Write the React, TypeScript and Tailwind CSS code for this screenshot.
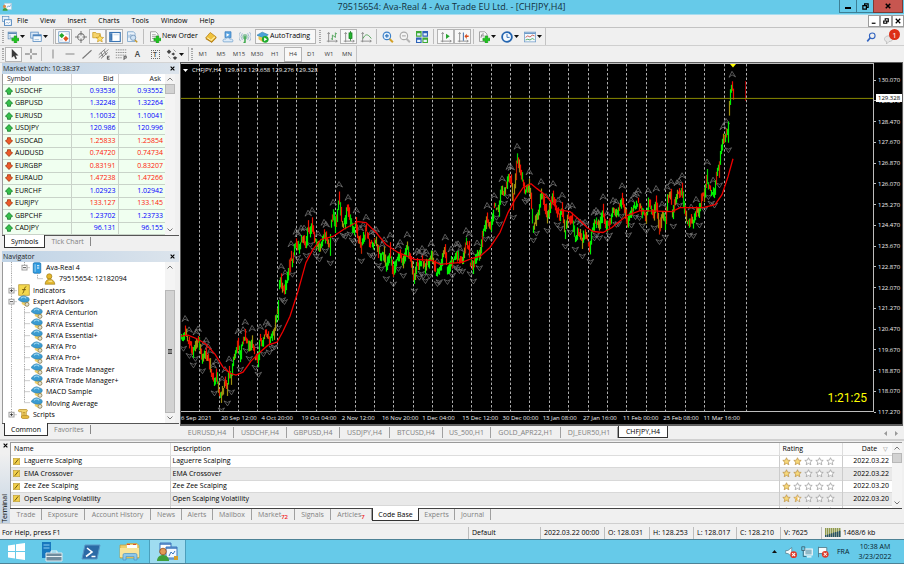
import type { ReactNode } from 'react';
import clsx from 'clsx';

type Point = [number, number];

const menus = ['File', 'View', 'Insert', 'Charts', 'Tools', 'Window', 'Help'];
const timeframes = ['M1', 'M5', 'M15', 'M30', 'H1', 'H4', 'D1', 'W1', 'MN'];

const quotes = [
  { symbol: 'USDCHF', bid: '0.93536', ask: '0.93552', up: true },
  { symbol: 'GBPUSD', bid: '1.32248', ask: '1.32264', up: true },
  { symbol: 'EURUSD', bid: '1.10032', ask: '1.10041', up: true },
  { symbol: 'USDJPY', bid: '120.986', ask: '120.996', up: true },
  { symbol: 'USDCAD', bid: '1.25833', ask: '1.25854', up: false },
  { symbol: 'AUDUSD', bid: '0.74720', ask: '0.74734', up: false },
  { symbol: 'EURGBP', bid: '0.83191', ask: '0.83207', up: false },
  { symbol: 'EURAUD', bid: '1.47238', ask: '1.47266', up: false },
  { symbol: 'EURCHF', bid: '1.02923', ask: '1.02942', up: true },
  { symbol: 'EURJPY', bid: '133.127', ask: '133.145', up: false },
  { symbol: 'GBPCHF', bid: '1.23702', ask: '1.23733', up: true },
  { symbol: 'CADJPY', bid: '96.131', ask: '96.155', up: true },
];

const advisors = [
  'ARYA Centurion',
  'ARYA Essential',
  'ARYA Essential+',
  'ARYA Pro',
  'ARYA Pro+',
  'ARYA Trade Manager',
  'ARYA Trade Manager+',
  'MACD Sample',
  'Moving Average',
];

const chartTabs = [
  { label: 'EURUSD,H4', width: 'w-[53px]' },
  { label: 'USDCHF,H4', width: 'w-[53px]' },
  { label: 'GBPUSD,H4', width: 'w-[53px]' },
  { label: 'USDJPY,H4', width: 'w-[50px]' },
  { label: 'BTCUSD,H4', width: 'w-[53px]' },
  { label: 'US_500,H1', width: 'w-[48px]' },
  { label: 'GOLD_APR22,H1', width: 'w-[70px]' },
  { label: 'DJ_EUR50,H1', width: 'w-[57px]' },
  { label: 'CHFJPY,H4', width: 'w-[50px]', active: true },
];

const terminalTabs = [
  { label: 'Trade', width: 'w-[31px]' },
  { label: 'Exposure', width: 'w-[43px]' },
  { label: 'Account History', width: 'w-[66px]' },
  { label: 'News', width: 'w-[31px]' },
  { label: 'Alerts', width: 'w-[31px]' },
  { label: 'Mailbox', width: 'w-[39px]' },
  { label: 'Market', width: 'w-[43px]', count: '72' },
  { label: 'Signals', width: 'w-[36px]' },
  { label: 'Articles', width: 'w-[41px]', count: '7' },
  { label: 'Code Base', width: 'w-[47px]', active: true },
  { label: 'Experts', width: 'w-[36px]' },
  { label: 'Journal', width: 'w-[36px]' },
];

const codeBase = [
  { name: 'Laguerre Scalping', rating: 2, date: '2022.03.22' },
  { name: 'EMA Crossover', rating: 2, date: '2022.03.22' },
  { name: 'Zee Zee Scalping', rating: 1, date: '2022.03.20' },
  { name: 'Open Scalping Volatility', rating: 1.5, date: '2022.03.20' },
  { name: 'Black Candlestand Scalping', rating: 1, date: '2022.03.18' },
];

const statusCells = [
  { text: 'Default', width: 'w-[72px]' },
  { text: '2022.03.22 00:00', width: 'w-[64px]' },
  { text: 'O: 128.031', width: 'w-[45px]' },
  { text: 'H: 128.253', width: 'w-[44px]' },
  { text: 'L: 128.017', width: 'w-[43px]' },
  { text: 'C: 128.210', width: 'w-[44px]' },
  { text: 'V: 7625', width: 'w-[41px]' },
];

const prices = Array.from({ length: 17 }, (_, i) => (130.07 - i * 0.8).toFixed(3));

const times = [
  '6 Sep 2021',
  '20 Sep 12:00',
  '4 Oct 20:00',
  '19 Oct 04:00',
  '2 Nov 12:00',
  '16 Nov 20:00',
  '1 Dec 04:00',
  '15 Dec 12:00',
  '30 Dec 00:00',
  '13 Jan 08:00',
  '27 Jan 16:00',
  '11 Feb 00:00',
  '25 Feb 08:00',
  '11 Mar 16:00',
];

const pricePath: Point[] = [
  [181, 340], [185, 333], [188, 342], [193, 352], [198, 342], [202, 360], [206, 353], [210, 367],
  [214, 385], [216, 375], [219, 393], [221, 398], [225, 382], [227, 388], [229, 372], [231, 378],
  [234, 357], [238, 347], [240, 358], [242, 343], [245, 337], [249, 347], [252, 343], [255, 357],
  [258, 362], [260, 338], [262, 343], [265, 335], [270, 340], [274, 333], [276, 317], [278, 310],
  [279, 283], [281, 280], [282, 287], [285, 288], [288, 275], [291, 257], [292, 263], [295, 245],
  [299, 248], [302, 238], [306, 245], [308, 225], [310, 233], [312, 227], [315, 242], [320, 247],
  [324, 233], [327, 242], [330, 247], [331, 225], [333, 215], [335, 227], [339, 200], [342, 225],
  [345, 223], [347, 208], [350, 220], [353, 232], [356, 225], [358, 238], [361, 247], [366, 230],
  [369, 242], [372, 245], [376, 243], [380, 257], [384, 255], [386, 268], [390, 253], [393, 272],
  [397, 258], [400, 255], [403, 263], [407, 248], [412, 267], [414, 280], [417, 263], [419, 267],
  [422, 260], [425, 270], [428, 263], [432, 257], [436, 273], [440, 268], [442, 260], [445, 250],
  [447, 270], [452, 262], [457, 257], [462, 263], [466, 243], [469, 248], [470, 263], [473, 268],
  [476, 257], [480, 253], [483, 233], [487, 220], [491, 228], [494, 207], [499, 207], [501, 192],
  [504, 193], [509, 177], [511, 183], [513, 200], [515, 183], [517, 160], [519, 167], [522, 177],
  [525, 192], [529, 188], [531, 203], [533, 228], [536, 220], [539, 212], [541, 195], [544, 203],
  [547, 218], [551, 205], [553, 197], [556, 210], [560, 217], [562, 210], [565, 233], [568, 217],
  [572, 220], [575, 240], [578, 232], [582, 242], [585, 233], [588, 243], [590, 247], [592, 230],
  [595, 223], [599, 227], [603, 212], [606, 227], [609, 222], [613, 213], [618, 210], [622, 200],
  [624, 207], [627, 223], [630, 215], [633, 208], [638, 203], [642, 213], [646, 217], [649, 202],
  [652, 212], [654, 215], [656, 202], [659, 230], [662, 215], [665, 222], [668, 197], [671, 198],
  [672, 215], [676, 197], [678, 192], [682, 193], [684, 207], [687, 223], [691, 220], [693, 223],
  [696, 210], [699, 212], [702, 195], [704, 197], [707, 175], [708, 187], [711, 193], [714, 192],
  [717, 173], [719, 168], [721, 150], [723, 138], [726, 135], [728, 132], [729, 107], [731, 90],
  [732, 86], [733, 92], [734, 97],
];

const averagePath: Point[] = [
  [181, 337], [188, 336], [198, 340], [206, 345], [215, 355], [223, 368], [230, 374], [236, 376],
  [243, 373], [251, 362], [260, 353], [268, 346], [277, 343], [283, 332], [290, 317], [298, 292],
  [306, 263], [313, 250], [321, 240], [333, 237], [345, 229], [358, 222], [366, 223], [376, 233],
  [386, 245], [398, 253], [415, 260], [432, 261], [440, 265], [450, 264], [462, 263], [472, 259],
  [480, 257], [490, 248], [500, 233], [508, 213], [515, 200], [523, 188], [531, 184], [537, 189],
  [545, 195], [552, 203], [558, 210], [570, 212], [578, 219], [587, 228], [593, 232], [603, 233],
  [612, 228], [618, 223], [627, 216], [640, 211], [672, 212], [680, 208], [690, 208], [703, 208],
  [715, 205], [722, 195], [728, 177], [733, 159],
];

interface Candle {
  x: number;
  high: number;
  low: number;
  color: string;
}

// One candle per pixel column, with a repeatable spread around the path.
function buildCandles(path: Point[]): Candle[] {
  let seed = 17;
  const rand = () => {
    seed = (seed * 16807) % 2147483647;
    return seed / 2147483647;
  };
  const candles: Candle[] = [];
  for (let i = 0; i < path.length - 1; i++) {
    const [x0, y0] = path[i];
    const [x1, y1] = path[i + 1];
    for (let x = x0; x < x1; x++) {
      const step = (y1 - y0) / (x1 - x0);
      const mid = y0 + step * (x - x0) + (rand() - 0.5) * 5;
      const half = 1 + rand() * 4 + Math.min(Math.abs(step) / 2, 6);
      const mixed = rand();
      let color = step < 0 ? '#00f000' : '#f01000';
      if (mixed < 0.2) color = '#a09010';
      else if (mixed < 0.35) color = step < 0 ? '#c82000' : '#00d000';
      candles.push({ x, high: mid - half, low: mid + half, color });
    }
  }
  return candles;
}

const candles = buildCandles(pricePath);

// Fractals: a candle that tops or bottoms both of its neighbours.
const fractals = candles.flatMap((c, i) => {
  const around = [candles[i - 1], candles[i + 1]];
  if (around.some((n) => !n)) return [];
  const marks: { x: number; y: number; up: boolean }[] = [];
  if (around.every((n) => n.high > c.high)) marks.push({ x: c.x, y: c.high - 7, up: true });
  if (around.every((n) => n.low < c.low)) marks.push({ x: c.x, y: c.low + 7, up: false });
  return marks;
});

const gridLines = [...Array.from({ length: 28 }, (_, i) => Math.round(199.2 + i * 19.42)), 746];

function Icon({ children, size = 'size-3' }: { children: ReactNode; size?: string }) {
  return (
    <svg viewBox="0 0 16 16" className={clsx('shrink-0', size)} fill="none" aria-hidden="true">
      {children}
    </svg>
  );
}

const plus = (
  <path d="M9.500 6.500h3.500v3h3V13h-3v3H9.500v-3h-3V9.500h3z" fill="#1fc41f" stroke="#0b8a0b" strokeWidth=".6" />
);

const axes = (
  <path d="M3.500 2v13M1 13.500h14M2 4l1.500-2L5 4M13 12l2 1.500-2 1.500" stroke="#8a8a8a" strokeWidth="1.200" />
);

const icons = {
  newChart: (
    <>
      <rect x="1.500" y="1.500" width="11" height="9" fill="#eef5fb" stroke="#5b88b5" />
      <path d="M1.500 3h11" stroke="#5b88b5" strokeWidth="2" />
      <path d="M4 5v4h6" stroke="#7da3c8" />
      {plus}
    </>
  ),
  profiles: (
    <>
      <rect x="1" y="1.500" width="10" height="8" fill="#dbe9f7" stroke="#4d84bd" />
      <rect x="4" y="5" width="11" height="9" fill="#f4f9fd" stroke="#4d84bd" />
      <path d="M4 6h11" stroke="#4d84bd" strokeWidth="2" />
      <path d="M6 11.500h6" stroke="#8fb3d6" />
    </>
  ),
  marketWatch: (
    <>
      <rect x="1" y="1" width="14" height="14" fill="#fff" stroke="#5f8fc0" />
      <path d="M5 2.500L8.500 6 5 9.500 1.500 6z" fill="#25a82a" />
      <path d="M10.500 6.500L14 10l-3.500 4L7 10z" fill="#e0521c" />
      <path d="M10 4h4M2.500 12h4" stroke="#a8c0d8" />
    </>
  ),
  dataWindow: (
    <>
      <circle cx="8" cy="8" r="4.500" stroke="#777" strokeWidth="1.400" />
      <path d="M8 0v6M8 10v6M0 8h6M10 8h6" stroke="#777" strokeWidth="1.400" />
    </>
  ),
  navigator: (
    <>
      <path d="M1 2h4l1 1.500h5V9H1z" fill="#f6d36b" stroke="#c79a22" />
      <path d="M10.500 5l1.500 3.300 3.500.4-2.600 2.300.8 3.500-3.200-1.700-3.200 1.700.8-3.500L5.500 8.700 9 8.300z" fill="#ffdf63" stroke="#c08c14" strokeWidth=".8" />
    </>
  ),
  terminal: (
    <>
      <rect x="1" y="2" width="14" height="12" fill="#fff" stroke="#3c76b4" strokeWidth="1.500" />
      <path d="M3 3v10" stroke="#3c76b4" strokeWidth="3" />
      <path d="M6 5h7" stroke="#b8cde2" />
    </>
  ),
  tester: (
    <>
      <path d="M2 1h8l2 2v11H2z" fill="#eaf2fa" stroke="#6d9cc7" />
      <path d="M4 9V5M6.500 10V4M9 8V5" stroke="#6d9cc7" />
      <circle cx="9.500" cy="9" r="3.500" fill="#cfe3f5" stroke="#6b8eb3" />
      <path d="M12 12l3 3" stroke="#c4952a" strokeWidth="2" />
    </>
  ),
  newOrder: (
    <>
      <path d="M2 1h7l3 3v10H2z" fill="#fbfbfb" stroke="#8b8b8b" />
      <path d="M4 5h5M4 7.500h6M4 10h4" stroke="#8b8b8b" />
      {plus}
    </>
  ),
  editor: (
    <>
      <path d="M1 9l6-7 8 6-6 7z" fill="#f0c23c" stroke="#b37d12" />
      <path d="M3 9l5 3.500 5-4.500" stroke="#fff0a8" strokeWidth="1.400" />
      <path d="M1 9v2l8 4.500 6-6V8l-6 6z" fill="#b9851c" />
    </>
  ),
  market: (
    <>
      <path d="M4 1h8v8H4z" fill="#5ba4e0" stroke="#3d7fbd" />
      <path d="M6 3l4 2-4 2.500" fill="#fff" />
      <path d="M2 14.500c-2-3 1-4.500 2.500-3.500C6 8 10 8.500 10.500 11c3-1 5 1 3.500 3.500z" fill="#dcebf8" stroke="#6f9fcc" />
    </>
  ),
  signals: (
    <>
      <path d="M4.500 3a7 7 0 000 9M2 1.500a10 10 0 000 12M11.500 3a7 7 0 010 9M14 1.500a10 10 0 010 12" stroke="#9fb9cf" strokeWidth="1.300" />
      <circle cx="8" cy="7.500" r="3.500" fill="#8fc4a4" />
      <path d="M8 7v8l-2 .5" stroke="#3ba84a" strokeWidth="2" />
    </>
  ),
  autoTrading: (
    <>
      <path d="M0 5.500l7-4L15 5 8 9.500z" fill="#4aa3d8" stroke="#2878ad" strokeWidth=".8" />
      <path d="M2 7v4l6 4V9z" fill="#eac552" />
      <circle cx="11" cy="11" r="4.500" fill="#1faa2d" />
      <path d="M9.500 8.500v5l4-2.500z" fill="#fff" />
    </>
  ),
  bars: (
    <>
      {axes}
      <path d="M8.500 5v7M6.500 10.500h2M8.500 6.500h2M12.500 2v7M10.500 7.500h2M12.500 3.500h2" stroke="#5aa863" strokeWidth="1.300" />
    </>
  ),
  candlesticks: (
    <>
      {axes}
      <path d="M10 0v13" stroke="#127a1c" />
      <rect x="8" y="2.500" width="4" height="7.500" fill="#25b52f" stroke="#127a1c" />
    </>
  ),
  lineChart: (
    <>
      {axes}
      <path d="M4 10c3-6 6-7 11 0" stroke="#55a35b" strokeWidth="1.300" />
    </>
  ),
  zoomIn: (
    <>
      <path d="M9.500 10l5 5" stroke="#d4a127" strokeWidth="2.600" />
      <circle cx="6.500" cy="6.500" r="5" fill="#e3f0fc" stroke="#3b7fc8" strokeWidth="1.500" />
      <path d="M6.500 4v5M4 6.500h5" stroke="#2f74bd" strokeWidth="1.500" />
    </>
  ),
  zoomOut: (
    <>
      <path d="M9.500 10l5 5" stroke="#b5b5b5" strokeWidth="2.600" />
      <circle cx="6.500" cy="6.500" r="5" fill="#f4f4f4" stroke="#aaa" strokeWidth="1.500" />
      <path d="M4 6.500h5" stroke="#aaa" strokeWidth="1.500" />
    </>
  ),
  tile: (
    <>
      <path d="M0 0h7.500v7.500H0zM8.500 8.500H16V16H8.500z" fill="#3faa35" />
      <path d="M8.500 0H16v7.500H8.500zM0 8.500h7.500V16H0z" fill="#2d62b8" />
      <path d="M1.500 3h4.500v3H1.500zM10 3h4.500v3H10zM1.500 11.500H6v3H1.500zM10 11.500h4.500v3H10z" fill="#e9f3ff" />
    </>
  ),
  autoScroll: (
    <>
      {axes}
      <path d="M8 3.500v7l5-3.500z" fill="#28a432" />
    </>
  ),
  chartShift: (
    <>
      {axes}
      <path d="M8.500 2v11" stroke="#4470aa" strokeWidth="1.400" />
      <path d="M10 7l3-3.500v2.500h2.500v2H13v2.500z" fill="#d74b1c" />
    </>
  ),
  indicators: (
    <>
      <path d="M2 1h7l3 3v10H2z" fill="#f8f8f8" stroke="#8b8b8b" />
      <path d="M4 9c1-6 2-5 4-5M4.500 6.500h4" stroke="#666" />
      {plus}
    </>
  ),
  periods: (
    <>
      <circle cx="8" cy="8" r="6.500" fill="#f5fafe" stroke="#2465b0" strokeWidth="2.400" />
      <path d="M8 4v4.500h3.500" stroke="#2465b0" strokeWidth="1.200" />
    </>
  ),
  templates: (
    <>
      <rect x=".500" y="1.500" width="15" height="13" fill="#f3f8fd" stroke="#6f9bc8" />
      <path d="M.500 3h15" stroke="#6f9bc8" strokeWidth="2" />
      <path d="M2 8.500l3-2 3 1.500 3-2.500 3 1" stroke="#c0392b" />
      <path d="M2 12l3-1 3 1 3-2 3 1.500" stroke="#2e9a40" />
    </>
  ),
  cursor: <path d="M5 1v12l3-2.500 2 4.500 2-1-2-4h4z" fill="#3a3a3a" />,
  crosshair: <path d="M8 1v5.500M8 9.500V15M0 8h6.500M9.500 8H16" stroke="#666" strokeWidth="1.400" />,
  vLine: <path d="M8 2v12" stroke="#8a8a8a" strokeWidth="1.400" />,
  hLine: <path d="M2 8h12" stroke="#8a8a8a" strokeWidth="1.400" />,
  trend: <path d="M2 14L14 3" stroke="#777" strokeWidth="1.400" />,
  channel: (
    <>
      <path d="M1 9l9-8M1 13L14 2M4 14l9-8M4 6l3 6M8 3l3 6" stroke="#666" />
      <path d="M15.500 11h-3v4h3M12.500 13h2.500" stroke="#333" />
    </>
  ),
  fibonacci: (
    <>
      <path d="M1 2.500h14M1 6h14M1 9.500h14M1 13h8" stroke="#777" strokeDasharray="2 1" />
      <path d="M12 16v-5h3v2.500h-3" stroke="#333" />
    </>
  ),
  arrows: (
    <>
      <path d="M1 5l3-3 3 3-3 3zM7 8l3-2 2 2-2 2z" fill="#444" />
      <path d="M9 13l3-2 3 2-3 3z" fill="#444" />
      <path d="M3 11l3 3M10 2l3 3" stroke="#777" />
    </>
  ),
  advisor: (
    <>
      <path d="M5 7h9v4l-4 4-5-3z" fill="#f0cf68" />
      <path d="M0 6C2 3 5 1 8 1l6 2.500c2 2 1 4.500-1 5.500C8 10.500 3 9 0 6z" fill="#3b9bd0" stroke="#1d6d9f" strokeWidth=".6" />
      <path d="M4 4.500c2-2 5-2 7 0" stroke="#a5dcf5" strokeWidth="1.400" />
      <circle cx="12" cy="12.500" r="2.600" fill="#e4e0d0" stroke="#8d8358" strokeWidth="1.200" />
    </>
  ),
  indicatorFolder: (
    <>
      <rect x="1" y="1" width="14" height="14" fill="#f4d84e" stroke="#b2922a" />
      <path d="M6 12.500c2 0 2-9 5-9M5.500 7.500h5" stroke="#6a5208" strokeWidth="1.200" />
    </>
  ),
  scripts: (
    <>
      <path d="M2 2h9c2 0 2 3 0 3v7H5V5H2c-2 0-2-3 0-3z" fill="#f2d36a" stroke="#b68e2a" />
      <path d="M6 10h7c2 0 2 4 0 4H6c-2 0-2-4 0-4z" fill="#e5b93f" stroke="#b68e2a" />
      <path d="M6.500 6h3M6.500 8h3" stroke="#b68e2a" />
    </>
  ),
  server: (
    <>
      <rect x="3" y="1" width="10" height="14" rx="1.500" fill="#2f9be0" stroke="#1670b0" />
      <path d="M5.500 3v10" stroke="#bfe3f8" />
      <path d="M8 5h3M8 8h3" stroke="#fff" strokeWidth="1.400" />
    </>
  ),
  account: (
    <>
      <circle cx="7" cy="4.500" r="3.500" fill="#e3b62c" stroke="#94700e" strokeWidth=".8" />
      <path d="M1.500 15c0-9 12-9 13 0z" fill="#e3b930" stroke="#94700e" strokeWidth=".8" />
      <path d="M6 11h5" stroke="#fbe9a0" strokeWidth="1.500" />
    </>
  ),
};

type IconName = keyof typeof icons;

function Handle({ width }: { width: string }) {
  return (
    <span className={clsx('flex shrink-0 justify-center self-stretch py-0.5', width)}>
      <span className="w-0.5 border-x border-dotted border-[#a9a9a9]" />
    </span>
  );
}

function Separator({ width }: { width: string }) {
  return (
    <span className={clsx('flex shrink-0 justify-center self-stretch py-px', width)}>
      <span className="w-px bg-[#bdbdbd]" />
    </span>
  );
}

function Caret() {
  return (
    <svg viewBox="0 0 5 3" className="h-[3px] w-[5px]" aria-hidden="true">
      <path d="M0 0h5L2.500 3z" fill="#111" />
    </svg>
  );
}

interface ToolProps {
  icon: IconName;
  label: string;
  pressed?: boolean;
  menu?: boolean;
}

function Tool({ icon, label, pressed, menu }: ToolProps) {
  return (
    <button
      type="button"
      aria-label={label}
      title={label}
      className={clsx(
        'flex h-[15px] shrink-0 items-center',
        menu ? 'w-[23px] gap-px pl-0.5' : 'w-[17px] justify-center',
        pressed && 'border border-[#b4b4b4] bg-[#f8f8f8]',
      )}
    >
      <Icon>{icons[icon]}</Icon>
      {menu && <Caret />}
    </button>
  );
}

function TitleBar() {
  return (
    <header className="flex h-[15px] shrink-0 items-start border-b border-[#a6dcef] bg-[#66cae9]">
      <span className="flex h-full w-16 items-center pl-0.5">
        <svg viewBox="0 0 16 16" className="size-[10px]" aria-hidden="true">
          <rect x="4" y="2" width="11" height="10" fill="#f4fafd" stroke="#b7cbd8" />
          <path d="M1 14c0-6 8-6 8 0z" fill="#3f9c3c" />
          <circle cx="4" cy="7" r="2.500" fill="#d98a4a" />
          <path d="M8 9l2-3 2 2 2-4" stroke="#3d7fc4" fill="none" />
        </svg>
      </span>
      <h1 className="flex-1 self-center text-center text-[9px] leading-[14px] text-[#14303c]">
        79515654: Ava-Real 4 - Ava Trade EU Ltd. - [CHFJPY,H4]
      </h1>
      <button type="button" aria-label="Minimize" className="flex h-[13px] w-[18px] items-center justify-center border border-t-0 border-[#3d7f95]">
        <span className="mt-1 h-0.5 w-1.5 bg-black" />
      </button>
      <button type="button" aria-label="Restore" className="flex h-[13px] w-4 items-center justify-center border-b border-[#3d7f95]">
        <svg viewBox="0 0 8 8" className="size-[7px]" fill="none" aria-hidden="true">
          <path d="M1 3h4v4H1zM3 3V1h4v4H5" stroke="#000" strokeWidth="1.400" />
        </svg>
      </button>
      <button type="button" aria-label="Close" className="mr-px flex h-[13px] w-[30px] items-center justify-center border border-t-0 border-[#7c3a34] bg-[#c75650]">
        <svg viewBox="0 0 8 8" className="size-1.5" fill="none" aria-hidden="true">
          <path d="M1 1l6 6M7 1L1 7" stroke="#000" strokeWidth="2" />
        </svg>
      </button>
    </header>
  );
}

const windowControls = [
  { label: 'Minimize chart', path: 'M1 7h5' },
  { label: 'Restore chart', path: 'M1 4h4v3H1zM3 3V1h4v4H6' },
  { label: 'Close chart', path: 'M1 1l6 6M7 1L1 7' },
];

function MenuBar() {
  return (
    <nav className="flex h-[13px] shrink-0 items-center border-b border-[#c2c2c2] pl-0.5">
      <svg viewBox="0 0 16 16" className="mr-[5px] size-[10px]" fill="none" aria-hidden="true">
        <rect x="1" y="1" width="10" height="8" fill="#e6f0fa" stroke="#4d84bd" />
        <rect x="4" y="6" width="11" height="9" fill="#fff" stroke="#4d84bd" strokeWidth="1.500" />
        <path d="M6 12l2-2 2 2 3-3" stroke="#4d84bd" />
      </svg>
      <div className="flex flex-1 gap-3 text-[7px] leading-3">
        {menus.map((m) => (
          <button key={m} type="button">
            {m}
          </button>
        ))}
      </div>
      {windowControls.map((c) => (
        <button
          key={c.label}
          type="button"
          aria-label={c.label}
          className="flex h-3 w-3 items-center justify-center border border-[#9b9b9b] bg-white"
        >
          <svg viewBox="0 0 8 8" className="size-1.5" fill="none" aria-hidden="true">
            <path d={c.path} stroke="#000" strokeWidth="1.600" />
          </svg>
        </button>
      ))}
    </nav>
  );
}

function MainToolbar() {
  return (
    <div className="flex h-[17px] shrink-0 items-center">
      <Handle width="w-[5px]" />
      <Tool icon="newChart" label="New Chart" menu />
      <Tool icon="profiles" label="Profiles" menu />
      <Separator width="w-1" />
      <Tool icon="marketWatch" label="Market Watch" pressed />
      <Tool icon="dataWindow" label="Data Window" />
      <Tool icon="navigator" label="Navigator" pressed />
      <Tool icon="terminal" label="Terminal" pressed />
      <Tool icon="tester" label="Strategy Tester" />
      <Separator width="w-[7px]" />
      <button type="button" className="flex h-[15px] w-[55px] shrink-0 items-center gap-px pl-0.5 text-[7px] whitespace-nowrap">
        <Icon>{icons.newOrder}</Icon>
        New Order
      </button>
      <Tool icon="editor" label="MetaEditor" />
      <Tool icon="market" label="Market" />
      <Tool icon="signals" label="Signals" />
      <button
        type="button"
        className="ml-0.5 flex h-[15px] w-[61px] shrink-0 items-center gap-px border border-[#b4b4b4] bg-[#f8f8f8] pl-px text-[7px] whitespace-nowrap"
      >
        <Icon>{icons.autoTrading}</Icon>
        AutoTrading
      </button>
      <Handle width="w-[7px]" />
      <Tool icon="bars" label="Bar Chart" />
      <Tool icon="candlesticks" label="Candlesticks" pressed />
      <Tool icon="lineChart" label="Line Chart" />
      <Separator width="w-[5px]" />
      <Tool icon="zoomIn" label="Zoom In" />
      <Tool icon="zoomOut" label="Zoom Out" />
      <Tool icon="tile" label="Tile Windows" />
      <Separator width="w-[7px]" />
      <Tool icon="autoScroll" label="Auto Scroll" pressed />
      <Tool icon="chartShift" label="Chart Shift" pressed />
      <Separator width="w-[5px]" />
      <Tool icon="indicators" label="Indicators" menu />
      <Tool icon="periods" label="Periods" menu />
      <Tool icon="templates" label="Templates" menu />
      <span className="w-px self-stretch bg-[#c4c4c4]" />
      <div className="flex flex-1 items-center justify-end gap-2 pr-1">
        <button type="button" aria-label="Search">
          <svg viewBox="0 0 16 16" className="size-[10px]" fill="none" aria-hidden="true">
            <path d="M7 9l-5 6" stroke="#3465c0" strokeWidth="2.500" />
            <circle cx="10" cy="6" r="4.500" stroke="#3465c0" strokeWidth="1.800" />
          </svg>
        </button>
        <button type="button" aria-label="Notifications" className="relative flex h-[15px] w-4 items-end">
          <svg viewBox="0 0 16 16" className="size-[10px]" aria-hidden="true">
            <path d="M2 5c3-3 10-3 12 1 1 4-2 6-6 6l-4 4v-4C0 11 0 7 2 5z" fill="#e6e6e6" stroke="#b0b0b0" />
          </svg>
          <span className="absolute top-0 right-0 size-[11px] rounded-full bg-[#dc2f17] text-center text-[8px] leading-[11px] text-white">
            1
          </span>
        </button>
      </div>
    </div>
  );
}

function DrawingToolbar() {
  return (
    <div className="flex h-[17px] shrink-0 items-center border-t border-[#cfcfcf]">
      <Handle width="w-[5px]" />
      <Tool icon="cursor" label="Cursor" pressed />
      <Tool icon="crosshair" label="Crosshair" />
      <Separator width="w-[5px]" />
      <Tool icon="vLine" label="Vertical Line" />
      <Tool icon="hLine" label="Horizontal Line" />
      <Tool icon="trend" label="Trendline" />
      <Tool icon="channel" label="Equidistant Channel" />
      <Tool icon="fibonacci" label="Fibonacci Retracement" />
      <button type="button" className="w-[17px] text-center text-[8px] font-semibold text-[#444]">
        A
      </button>
      <button type="button" className="flex w-[18px] justify-center">
        <span className="size-[9px] border border-dotted border-[#666] text-center text-[7px] leading-[7px] font-semibold text-[#444]">
          T
        </span>
      </button>
      <Tool icon="arrows" label="Arrows" menu />
      <Separator width="w-0.5" />
      <Handle width="w-[5px]" />
      {timeframes.map((tf) => (
        <button
          key={tf}
          type="button"
          className={clsx(
            'flex h-[15px] w-[18px] shrink-0 items-center justify-center text-[6px] text-[#3a3a3a]',
            tf === 'H4' && 'border border-[#b4b4b4] bg-[#f8f8f8]',
          )}
        >
          {tf}
        </button>
      ))}
      <span className="w-px self-stretch bg-[#c4c4c4]" />
    </div>
  );
}

function PanelTitle({ children }: { children: ReactNode }) {
  return (
    <h2 className="flex h-[11px] shrink-0 items-center justify-between bg-linear-to-r from-[#bfd3e6] to-[#dce4ec] px-px text-[7px] leading-[10px] text-[#222]">
      {children}
      <button type="button" aria-label="Close panel" className="mr-[3px]">
        <svg viewBox="0 0 8 8" className="size-[5px]" aria-hidden="true">
          <path d="M1 1l6 6M7 1L1 7" stroke="#000" strokeWidth="1.800" />
        </svg>
      </button>
    </h2>
  );
}

function ScrollBar({ thumb }: { thumb: ReactNode }) {
  return (
    <div className="flex w-[10px] shrink-0 flex-col items-center bg-[#f4f4f4]">
      <svg viewBox="0 0 10 10" className="size-[10px]" fill="none" aria-hidden="true">
        <path d="M2.500 6.500L5 4l2.500 2.500" stroke="#777" />
      </svg>
      {thumb}
      <svg viewBox="0 0 10 10" className="mt-auto size-[10px]" fill="none" aria-hidden="true">
        <path d="M2.500 3.500L5 6l2.500-2.500" stroke="#777" />
      </svg>
    </div>
  );
}

function PanelTabs({ active, other }: { active: string; other: string }) {
  return (
    <div className="flex h-[14px] shrink-0 border-t border-[#555] pl-0.5 text-[7px] leading-[9px]">
      <button type="button" className="-mt-px h-[13px] border border-t-0 border-[#333] bg-white px-[6px]">
        {active}
      </button>
      <button type="button" className="-mt-px h-[13px] text-[#808080]">
        <span className="block border-r border-[#888] px-1.5">{other}</span>
      </button>
    </div>
  );
}

function Trend({ up }: { up: boolean }) {
  return (
    <svg viewBox="0 0 8 8" className="size-2 shrink-0" aria-hidden="true">
      <path
        d={up ? 'M4 .500L7.600 4.300 5.500 5.500v1.800h-3V5.500L.400 4.300z' : 'M4 7.500L.400 3.700 2.500 2.500V.700h3v1.800l2.100 1.200z'}
        fill={up ? '#35c04a' : '#ee5a2a'}
        stroke={up ? '#14762a' : '#9c3210'}
        strokeWidth=".8"
      />
    </svg>
  );
}

function MarketWatch() {
  return (
    <section className="flex shrink-0 flex-col">
      <PanelTitle>Market Watch: 10:38:37</PanelTitle>
      <div className="flex h-[161px] border-l border-[#999] bg-white">
        <table className="h-full flex-1 border-collapse text-[7px] leading-[10px]">
          <thead>
            <tr className="border-b border-[#c9d3c9] text-[#222]">
              <th className="w-[68px] border-r border-[#d5d5d5] p-0 pl-1 text-left font-normal">Symbol</th>
              <th className="w-[47px] border-r border-[#d5d5d5] p-0 pr-1 text-right font-normal">Bid</th>
              <th className="p-0 pr-1 text-right font-normal">Ask</th>
            </tr>
          </thead>
          <tbody>
            {quotes.map((q) => (
              <tr key={q.symbol} className="border-b border-[#c9d3c9] bg-[#f0fff0]">
                <td className="border-r border-[#c9d3c9] p-0 pl-0.5">
                  <span className="flex items-center gap-0.5">
                    <Trend up={q.up} />
                    {q.symbol}
                  </span>
                </td>
                <td className={clsx('border-r border-[#c9d3c9] p-0 pr-0.5 text-right', q.up ? 'text-[#0000ff]' : 'text-[#ff2008]')}>
                  {q.bid}
                </td>
                <td className={clsx('p-0 pr-0.5 text-right', q.up ? 'text-[#0000ff]' : 'text-[#ff2008]')}>{q.ask}</td>
              </tr>
            ))}
          </tbody>
        </table>
        <ScrollBar thumb={<span className="h-[10px] w-full border border-[#b8b8b8] bg-[#d2d2d2]" />} />
        <span className="w-1 bg-[#f0f0f0]" />
      </div>
      <PanelTabs active="Symbols" other="Tick Chart" />
    </section>
  );
}

const guidePaths = {
  none: '',
  line: 'M6.500 0v12',
  tee: 'M6.500 0v12M6.500 6h6',
  end: 'M6.500 0v6h6',
};

function Guide({ kind, box }: { kind: keyof typeof guidePaths; box?: '+' | '-' }) {
  return (
    <svg viewBox="0 0 13 12" className="h-full w-[13px] shrink-0" preserveAspectRatio="none" fill="none" aria-hidden="true">
      <path d={guidePaths[kind]} stroke="#999" strokeDasharray="1 1" />
      {box && (
        <>
          <rect x="4" y="3.500" width="5" height="5" fill="#fff" stroke="#999" />
          <path d={box === '+' ? 'M5 6h3M6.500 4.500v3' : 'M5 6h3'} stroke="#222" strokeWidth=".8" />
        </>
      )}
    </svg>
  );
}

function TreeRow({ guides, icon, children }: { guides: ReactNode; icon: IconName; children: ReactNode }) {
  return (
    <li className="flex min-h-0 flex-1 items-center">
      {guides}
      <Icon>{icons[icon]}</Icon>
      <span className="pl-[3px] whitespace-nowrap">{children}</span>
    </li>
  );
}

function Navigator() {
  return (
    <section className="mt-0.5 flex min-h-0 flex-1 flex-col">
      <PanelTitle>Navigator</PanelTitle>
      <div className="flex min-h-0 flex-1 border-l border-[#999] bg-white">
        <ul className="flex min-w-0 flex-1 flex-col pb-[3px] pl-0.5 text-[7px] leading-[11px]">
          <TreeRow icon="server" guides={<><Guide kind="line" /><Guide kind="end" box="-" /></>}>
            Ava-Real 4
          </TreeRow>
          <TreeRow icon="account" guides={<><Guide kind="line" /><Guide kind="none" /><Guide kind="end" /></>}>
            79515654: 12182094
          </TreeRow>
          <TreeRow icon="indicatorFolder" guides={<Guide kind="tee" box="+" />}>
            Indicators
          </TreeRow>
          <TreeRow icon="advisor" guides={<Guide kind="tee" box="-" />}>
            Expert Advisors
          </TreeRow>
          {advisors.map((name, i) => (
            <TreeRow
              key={name}
              icon="advisor"
              guides={
                <>
                  <Guide kind="line" />
                  <Guide kind={i === advisors.length - 1 ? 'end' : 'tee'} />
                </>
              }
            >
              {name}
            </TreeRow>
          ))}
          <TreeRow icon="scripts" guides={<Guide kind="end" box="+" />}>
            Scripts
          </TreeRow>
        </ul>
        <ScrollBar
          thumb={
            <span className="mt-[18px] flex min-h-0 flex-1 items-center justify-center self-stretch border border-[#b8b8b8] bg-[#d2d2d2]">
              <span className="h-[5px] w-1 border-y border-[#444] bg-[#888]" />
            </span>
          }
        />
        <span className="w-1 bg-[#f0f0f0]" />
      </div>
      <PanelTabs active="Common" other="Favorites" />
    </section>
  );
}

function Plot() {
  return (
    <div className="relative min-h-0 min-w-0 flex-1 border-t border-r border-b border-[#bdbdbd]">
      <svg viewBox="181 64 692 348" className="absolute inset-0 size-full" preserveAspectRatio="none" fill="none" role="img" aria-label="CHFJPY four hour candles">
        {gridLines.map((x) => (
          <path key={x} d={`M${x + 0.5} 64v348`} stroke="#b0b0b0" strokeDasharray="2.500 2" />
        ))}
        {fractals.map((f, i) => (
          <path
            key={i}
            d={f.up ? `M${f.x - 3} ${f.y + 3}l3-6 3.500 5.500-3.500-2z` : `M${f.x - 3} ${f.y - 2}l3.500 5 3-5-3 1.500z`}
            stroke="#808080"
            strokeWidth=".7"
          />
        ))}
        {candles.map((c) => (
          <path key={c.x} d={`M${c.x + 0.5} ${c.high}V${c.low}`} stroke={c.color} strokeWidth="1.200" />
        ))}
        <path d="M745.500 81v20" stroke="#a00000" />
        <path d="M181 98.500h692" stroke="#8a8a00" />
        <path d={`M${averagePath.map((p) => p.join(' ')).join('L')}`} stroke="#f00000" strokeWidth="1.300" />
        <path d="M730 64h6l-3 3.500z" fill="#ff0" />
      </svg>
      <p className="relative flex items-center gap-1 pt-0.5 pl-0.5 text-[6px] leading-2 whitespace-nowrap text-[#f2f2f2]">
        <svg viewBox="0 0 5 3" className="h-[3px] w-[5px]" aria-hidden="true">
          <path d="M0 0h5L2.500 3z" fill="#fff" />
        </svg>
        <span>CHFJPY,H4&nbsp; 129.612 129.658 129.276 129.328</span>
      </p>
      <time className="absolute right-[6px] bottom-[5px] font-['Roboto',sans-serif] text-[12px] leading-4 text-[#ffff00]">
        1:21:25
      </time>
    </div>
  );
}

function ChartWindow() {
  return (
    <section className="flex min-w-0 flex-1 flex-col">
      <div className="mr-px flex min-h-0 flex-1 flex-col border border-b-2 border-[#5e5e5e] bg-black text-[6px] leading-2 text-[#f2f2f2]">
        <div className="flex min-h-0 flex-1">
          <Plot />
          <div className="relative flex w-[28px] shrink-0 flex-col justify-between pt-[13px]">
            {prices.map((p) => (
              <span key={p} className="flex items-center gap-0.5 nth-17:-mb-1">
                <span className="h-px w-0.5 bg-[#bdbdbd]" />
                {p}
              </span>
            ))}
            <span className="absolute top-[9%] left-0.5 bg-white px-0.5 text-black">129.328</span>
          </div>
        </div>
        <div className="flex h-3 shrink-0 pr-[28px]">
          {times.map((t) => (
            <span key={t} className="w-[5.8%] pt-0.5 whitespace-nowrap">
              {t}
            </span>
          ))}
        </div>
      </div>
      <div className="flex h-[13px] shrink-0 items-start pt-px pl-px text-[7px] leading-[11px] text-[#808080]">
        {chartTabs.map((t) => (
          <button
            key={t.label}
            type="button"
            className={clsx(
              'shrink-0 text-center whitespace-nowrap',
              t.width,
              t.active ? '-mt-px h-3 border border-t-0 border-[#333] bg-white text-black' : 'border-r border-[#a0a0a0]',
            )}
          >
            {t.label}
          </button>
        ))}
        <div className="flex flex-1 justify-end gap-2 pt-1 pr-1.5">
          {['M3 0v5L0 2.500z', 'M0 0v5l3-2.500z'].map((d) => (
            <svg key={d} viewBox="0 0 3 5" className="h-[5px] w-[3px]" aria-hidden="true">
              <path d={d} fill="#999" />
            </svg>
          ))}
        </div>
      </div>
    </section>
  );
}

const starPath = 'M5 .800l1.200 2.700 2.900.300-2.200 1.900.700 2.900L5 7.100 2.400 8.600l.700-2.900L.900 3.800l2.900-.300z';

function Stars({ rating }: { rating: number }) {
  return (
    <span className="flex gap-0.5" aria-label={`${rating} of 5`}>
      {[0, 1, 2, 3, 4].map((i) => (
        <svg key={i} viewBox="0 0 10 10" className="size-[9px]" aria-hidden="true">
          <path d={starPath} fill={rating >= i + 1 ? '#f8d978' : '#fff'} stroke={rating > i ? '#b99045' : '#999'} strokeWidth=".8" />
          {rating === i + 0.5 && <path d="M5 1.500v5L2.800 8l.600-2.400L1.500 4 4 3.800z" fill="#f0b93c" />}
        </svg>
      ))}
    </span>
  );
}

function Terminal() {
  return (
    <section className="flex h-[84px] shrink-0 border-t-2 border-[#d0d0d0]">
      <div className="flex w-[10px] flex-col items-center bg-linear-to-b from-[#f0f0f0] from-15% to-[#c3d3e3] pt-0.5">
        <button type="button" aria-label="Close terminal">
          <svg viewBox="0 0 8 8" className="block size-[5px]" aria-hidden="true">
            <path d="M1 1l6 6M7 1L1 7" stroke="#000" strokeWidth="1.800" />
          </svg>
        </button>
        <h2 className="mt-auto rotate-180 text-[7px] leading-[10px] [writing-mode:vertical-rl]">Terminal</h2>
      </div>
      <div className="flex min-w-0 flex-1 flex-col">
        <div className="mt-px mr-0.5 flex h-[66px] overflow-hidden border-t border-l border-[#999] bg-white">
          <table className="h-[75px] flex-1 table-fixed border-collapse text-[7px] leading-[10px]">
            <thead>
              <tr className="h-3 border-b border-[#ddd] bg-[#fbfbfb]">
                <th className="w-[159px] border-r border-[#ddd] p-0 pl-[3px] text-left font-normal">Name</th>
                <th className="border-r border-[#ddd] p-0 pl-[3px] text-left font-normal">Description</th>
                <th className="w-[63px] border-r border-[#ddd] p-0 pl-[3px] text-left font-normal">Rating</th>
                <th className="w-[50px] p-0 pr-1 text-right font-normal">
                  Date <span className="pl-1 text-[6px] text-[#888]">▽</span>
                </th>
              </tr>
            </thead>
            <tbody>
              {codeBase.map((row) => (
                <tr key={row.name} className="border-b border-[#d8d8d8] even:bg-[#e9e9e9]">
                  <td className="border-r border-[#ccc] p-0 pl-0.5">
                    <span className="flex items-center gap-1">
                      <svg viewBox="0 0 16 16" className="size-[7px]" aria-hidden="true">
                        <rect x=".500" y=".500" width="15" height="15" fill="#f2cf4a" stroke="#a98a2c" />
                        <path d="M4 13L12 3" stroke="#5e4a08" strokeWidth="2" />
                      </svg>
                      {row.name}
                    </span>
                  </td>
                  <td className="border-r border-[#ccc] p-0 pl-0.5">{row.name}</td>
                  <td className="border-r border-[#ccc] p-0 pl-0.5">
                    <Stars rating={row.rating} />
                  </td>
                  <td className="p-0 pr-[3px] text-right">{row.date}</td>
                </tr>
              ))}
            </tbody>
          </table>
          <ScrollBar thumb={<span className="h-[10px] w-full border border-[#b8b8b8] bg-[#d2d2d2]" />} />
        </div>
        <div className="mr-0.5 flex flex-1 items-start border-t border-[#444] pl-px text-[7px] leading-[11px] text-[#808080]">
          {terminalTabs.map((t) => (
            <button
              key={t.label}
              type="button"
              className={clsx(
                'h-[11px] shrink-0 text-center whitespace-nowrap',
                t.width,
                t.active ? '-mt-px h-[13px] border border-t-0 border-[#333] bg-white text-black' : 'border-r border-[#a0a0a0]',
              )}
            >
              {t.label}
              {t.count && <sub className="text-[6px] font-semibold text-[#f02020]">{t.count}</sub>}
            </button>
          ))}
        </div>
      </div>
    </section>
  );
}

function StatusBar() {
  return (
    <footer className="flex h-[16px] shrink-0 items-center border-t border-[#cfcfcf] pt-0.5 text-[7px] leading-[12px] whitespace-nowrap">
      <span className="flex-1 pl-0.5">For Help, press F1</span>
      {statusCells.map((c) => (
        <span key={c.text} className={clsx('border-l border-[#bdbdbd] pl-[3px]', c.width)}>
          {c.text}
        </span>
      ))}
      <span className="flex w-[83px] items-center gap-0.5 border-l border-[#bdbdbd] pl-[3px]">
        <svg viewBox="0 0 16 9" className="h-[9px] w-4" aria-hidden="true">
          {[0, 1, 2, 3, 4, 5, 6, 7].map((i) => (
            <g key={i}>
              <path d={`M${i * 2 + 0.75} 0v9`} stroke="#85913a" strokeWidth="1.300" />
              <path d={`M${i * 2 + 0.75} ${7 - i * 0.6}V9`} stroke="#1c4a66" strokeWidth="1.300" />
            </g>
          ))}
        </svg>
        1468/6 kb
      </span>
    </footer>
  );
}

function Taskbar() {
  return (
    <div className="flex h-[25px] shrink-0 items-stretch border-y border-[#4d8296] bg-[#66cae9]">
      <button type="button" aria-label="Start" className="flex w-8 items-center justify-center">
        <svg viewBox="0 0 17 17" className="size-[17px]" aria-hidden="true">
          <path d="M0 2.500l7-1V8H0zM8 1.300L17 0v8H8zM0 9h7v6.500l-7-1zM8 9h9v8l-9-1.300z" fill="#fff" />
        </svg>
      </button>
      <button type="button" aria-label="Server Manager" className="flex w-[39px] items-center justify-center">
        <svg viewBox="0 0 22 20" className="h-5 w-[22px]" aria-hidden="true">
          <path d="M1 0h9v16H1z" fill="#1878be" />
          <path d="M2.500 3h6M2.500 6h6" stroke="#8fd0f5" />
          <path d="M5 11h16v8H5z" fill="#6f8c9e" stroke="#dfe9ee" />
          <path d="M10 11V9h6v2M5 14.500h16" stroke="#e8f0f4" fill="none" />
        </svg>
      </button>
      <button type="button" aria-label="PowerShell" className="flex w-10 items-center justify-center">
        <svg viewBox="0 0 20 16" className="h-4 w-5" fill="none" aria-hidden="true">
          <path d="M4 1h15l-3 14H1z" fill="#2b6aa6" stroke="#5b97c6" />
          <path d="M6 4l5 4-6 4.500M10.500 12.500h4" stroke="#fff" strokeWidth="1.600" />
        </svg>
      </button>
      <button type="button" aria-label="File Explorer" className="flex w-[38px] items-center justify-center">
        <svg viewBox="0 0 22 20" className="h-5 w-[22px]" aria-hidden="true">
          <path d="M1 3h6l1-1.500h10l2 2V16H1z" fill="#efce6d" stroke="#c39b36" strokeWidth=".7" />
          <path d="M8 3h10v3H8z" fill="#fff" />
          <path d="M8 2.500h3M14 2.500h3" stroke="#e0522c" />
          <path d="M1 6h19v9H1z" fill="#f9e49a" />
          <path d="M4 18v-5q0-1.500 1.500-1.500h11q1.500 0 1.500 1.500v5h-3v-3.500H7V18z" fill="#8ec7ea" stroke="#4a92c2" strokeWidth=".7" />
        </svg>
      </button>
      <button type="button" aria-label="MetaTrader 4" className="flex w-[37px] items-center justify-center border-x border-[#4b9fbc] bg-[#9fdcf0]">
        <svg viewBox="0 0 22 20" className="h-5 w-[22px]" fill="none" aria-hidden="true">
          <path d="M3 1h11v10H3z" fill="#fff" stroke="#3a75bd" />
          <path d="M9 5h11v12H9z" fill="#f4f9ff" stroke="#3a75bd" />
          <path d="M9 6h11M3 2h11" stroke="#3a75bd" strokeWidth="1.600" />
          <path d="M12 14l2-4 2 2 2-3M11 16h7" stroke="#3a75bd" />
          <path d="M0 19c0-8 12-8 12 0z" fill="#3fa03a" />
          <circle cx="6" cy="9.500" r="3.300" fill="#e39a58" stroke="#97501c" strokeWidth=".8" />
          <path d="M17 14h4v4h-4z" fill="#d6a02a" />
        </svg>
      </button>
      <div className="flex flex-1 items-center justify-end pr-3 text-[7px] leading-[10px] text-[#08222c]">
        <button type="button" aria-label="Show hidden icons" className="mr-2">
          <svg viewBox="0 0 5 3" className="h-[3px] w-[5px]" aria-hidden="true">
            <path d="M0 3h5L2.500 0z" fill="#111" />
          </svg>
        </button>
        <div className="flex gap-1">
          <svg viewBox="0 0 16 16" className="size-3" aria-hidden="true">
            <path d="M1 6h3l5-4v12l-5-4H1z" fill="#f5fbfd" stroke="#456d7c" strokeWidth=".8" />
            <circle cx="11.500" cy="11.500" r="4.500" fill="#dc3a2a" />
            <path d="M9.500 9.500l4 4M13.500 9.500l-4 4" stroke="#fff" strokeWidth="1.400" />
          </svg>
          <svg viewBox="0 0 16 16" className="size-3" aria-hidden="true">
            <path d="M5 4h10v8H5zM8 14.500h6" fill="#8fb9c8" stroke="#f5fbfd" strokeWidth="1.500" />
            <path d="M1 1h4v5H1zM3 6v8h4" fill="none" stroke="#3f6878" strokeWidth="1.200" />
          </svg>
          <svg viewBox="0 0 16 16" className="size-3" aria-hidden="true">
            <path d="M2 1v14M2 2h11v8H2" fill="#f5fbfd" stroke="#456d7c" />
            <circle cx="11" cy="11" r="4.500" fill="#dc3a2a" />
            <path d="M9 9l4 4M13 9l-4 4" stroke="#fff" strokeWidth="1.400" />
          </svg>
        </div>
        <span className="w-[29px] pl-2">FRA</span>
        <time className="w-[34px] text-center whitespace-nowrap">
          10:38 AM
          <br />
          3/23/2022
        </time>
      </div>
    </div>
  );
}

export default function App() {
  return (
    <div className="flex h-screen min-h-[564px] flex-col overflow-hidden bg-[#f0f0f0] font-['Open_Sans','Noto_Sans',sans-serif] text-black">
      <TitleBar />
      <MenuBar />
      <MainToolbar />
      <DrawingToolbar />
      <main className="flex min-h-0 flex-1">
        <aside className="flex w-[180px] shrink-0 flex-col border-t border-[#d4d4d4] pr-px pb-0.5 pl-0.5">
          <MarketWatch />
          <Navigator />
        </aside>
        <ChartWindow />
      </main>
      <Terminal />
      <StatusBar />
      <Taskbar />
    </div>
  );
}
